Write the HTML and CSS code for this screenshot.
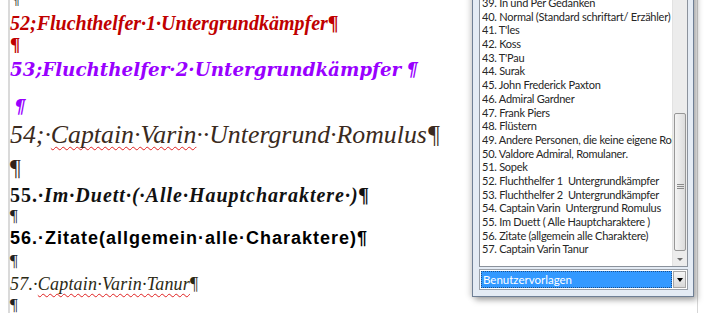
FILE: index.html
```html
<!DOCTYPE html>
<html lang="de">
<head>
<meta charset="UTF-8" />
<title>Formatvorlagen</title>
<link rel="stylesheet" href="styles.css">
</head>
<body>
  <div class="page">
    <div class="doc">
      <p class="para cut">¶</p>
      <p class="para p52">52;Fluchthelfer·1·Untergrundkämpfer<span class="pil">¶</span></p>
      <p class="para p52 blank">¶</p>
      <p class="para p53">53;Fluchthelfer·2·Untergrundkämpfer<span class="gap"></span>¶</p>
      <p class="para p53 blank">¶</p>
      <p class="para p54">54;·<span class="spell">Captain·Varin</span>··Untergrund·Romulus¶</p>
      <p class="para p54 blank">¶</p>
      <p class="para p55"><span class="num">55.</span>·Im·Duett·(·Alle·Hauptcharaktere·)¶</p>
      <p class="para normal blank">¶</p>
      <p class="para p56">56.·Zitate(allgemein·alle·Charaktere)¶</p>
      <p class="para normal blank">¶</p>
      <p class="para p57">57.·<span class="spell">Captain·Varin·Tanur</span><span class="pil">¶</span></p>
      <p class="para normal blank last">¶</p>
    </div>

    <div class="page-edge"></div>

    <div class="styles-win">
      <div class="listbox">
        <ul class="items">
          <li>39. In und Per Gedanken</li>
          <li>40. Normal (Standard schriftart/ Erzähler)</li>
          <li>41. T'les</li>
          <li>42. Koss</li>
          <li>43. T'Pau</li>
          <li>44. Surak</li>
          <li>45. John Frederick Paxton</li>
          <li>46. Admiral Gardner</li>
          <li>47. Frank Piers</li>
          <li>48. Flüstern</li>
          <li>49. Andere Personen, die keine eigene Rolle haben</li>
          <li>50. Valdore Admiral, Romulaner.</li>
          <li>51. Sopek</li>
          <li>52. Fluchthelfer 1&nbsp; Untergrundkämpfer</li>
          <li>53. Fluchthelfer 2&nbsp; Untergrundkämpfer</li>
          <li>54. Captain Varin&nbsp; Untergrund Romulus</li>
          <li>55. Im Duett ( Alle Hauptcharaktere )</li>
          <li>56. Zitate (allgemein alle Charaktere)</li>
          <li>57. Captain Varin Tanur</li>
        </ul>
        <div class="scrollbar">
          <div class="track">
            <div class="thumb"><span class="grip"></span></div>
          </div>
          <div class="arrow-down"></div>
        </div>
      </div>
      <div class="combo">
        <div class="combo-value">Benutzervorlagen</div>
        <div class="combo-btn"></div>
      </div>
    </div>
  </div>
</body>
</html>
```

FILE: styles.css
```css
* {
  margin: 0;
  padding: 0;
  box-sizing: border-box;
}

html, body {
  width: 709px;
  height: 313px;
  overflow: hidden;
  background: #fff;
}

.page {
  position: relative;
  width: 709px;
  height: 313px;
  overflow: hidden;
}

/* document with formatting marks */
.doc {
  margin-left: 8px;
  height: 313px;
  border-left: 2px solid #dadada;
  display: flex;
  flex-direction: column;
}

.para {
  white-space: nowrap;
  font-family: "Liberation Serif", serif;
}

.cut {
  height: 6px;
  line-height: 0;
  font-size: 16px;
  color: #222;
  overflow: hidden;
  padding-left: 2px;
}

.p52 {
  height: 28px;
  line-height: 34px;
  font-size: 20px;
  font-weight: bold;
  font-style: italic;
  color: #c00000;
}

.p52 .pil {
  font-style: normal;
}

.p52.blank {
  height: 21px;
  line-height: 21px;
  font-style: normal;
  font-size: 19px;
}

.p53 {
  height: 27px;
  line-height: 30px;
  font-family: "DejaVu Serif", serif;
  font-size: 18.3px;
  font-weight: bold;
  font-style: italic;
  color: #9900ff;
}

.p53 .gap {
  display: inline-block;
  width: 5px;
}

.p53.blank {
  height: 32px;
  line-height: 50px;
  padding-left: 4px;
}

.p54 {
  height: 38px;
  line-height: 42px;
  font-size: 25.8px;
  font-style: italic;
  color: #3a2a20;
}

.p54.blank {
  height: 28px;
  line-height: 30px;
  font-style: normal;
  font-size: 24px;
  color: #35231a;
}

.p55 {
  height: 25px;
  line-height: 30px;
  font-size: 20px;
  letter-spacing: 1px;
  font-weight: bold;
  font-style: italic;
  color: #111;
}

.p55 .num {
  font-style: normal;
}

.normal {
  height: 20px;
  line-height: 22px;
  font-size: 17px;
  color: #222;
}

.p56 {
  height: 25px;
  line-height: 26px;
  font-family: "Liberation Sans", sans-serif;
  font-size: 18px;
  letter-spacing: 1px;
  font-weight: bold;
  color: #000;
}

.p57 {
  height: 22px;
  line-height: 28px;
  font-size: 18px;
  letter-spacing: 0.2px;
  font-style: italic;
  color: #2c2a14;
}

.p57 .pil {
  font-style: normal;
}

.last {
  line-height: 26px;
}

.spell {
  text-decoration: underline wavy #e02020;
  text-decoration-thickness: 1px;
  text-underline-offset: 3px;
  text-decoration-skip-ink: none;
}

.page-edge {
  position: absolute;
  left: 697px;
  top: 0;
  width: 1px;
  height: 313px;
  background: #d6d6d6;
}

/* floating styles window */
.styles-win {
  position: absolute;
  left: 472px;
  top: -14px;
  width: 222px;
  height: 311px;
  background: #e4ebf4;
  border: 1px solid #6f7f95;
  box-shadow: 3px 3px 6px rgba(0, 0, 0, 0.35), -3px 0 5px rgba(0, 0, 0, 0.12);
  padding: 0 5px 6px 6px;
  display: flex;
  flex-direction: column;
  gap: 2px;
}

.listbox {
  flex: 1;
  border: 1px solid #8b929c;
  border-top: none;
  background: #fff;
  display: flex;
  overflow: hidden;
}

.items {
  list-style: none;
  flex: 1;
  min-width: 0;
  overflow: hidden;
  padding: 9px 0 0 2px;
  font-family: "Lato", sans-serif;
  font-size: 11px;
  letter-spacing: -0.25px;
  color: #262626;
}

.items li {
  height: 13.7px;
  line-height: 13.7px;
  white-space: nowrap;
  overflow: hidden;
}

.scrollbar {
  width: 15px;
  background: #ececec;
  border-left: 1px solid #e2e2e2;
  display: flex;
  flex-direction: column;
}

.track {
  flex: 1;
  padding-top: 126px;
  padding-bottom: 1px;
}

.thumb {
  height: 138px;
  margin: 0 1px;
  border: 1px solid #979797;
  border-radius: 2px;
  background: linear-gradient(to right, #f4f4f4, #dcdcdc);
  display: flex;
  align-items: center;
  justify-content: center;
  padding-top: 8px;
}

.grip {
  width: 7px;
  height: 5px;
  border-top: 1px solid #8a8a8a;
  border-bottom: 1px solid #8a8a8a;
  position: relative;
}

.grip::after {
  content: "";
  position: absolute;
  left: 0;
  right: 0;
  top: 1px;
  border-top: 1px solid #8a8a8a;
}

.arrow-down {
  height: 14px;
  display: flex;
  align-items: center;
  justify-content: center;
}

.arrow-down::before {
  content: "";
  border-left: 3px solid transparent;
  border-right: 3px solid transparent;
  border-top: 3px solid #6e6e6e;
}

.combo {
  height: 21px;
  border: 1px solid #9aa0a8;
  background: #fff;
  display: flex;
  padding: 1px;
}

.combo-value {
  flex: 1;
  background: #3399ff;
  outline: 1px dotted #1d4f8a;
  outline-offset: -1px;
  color: #fff;
  font-family: "Lato", sans-serif;
  font-size: 11.5px;
  line-height: 17px;
  padding-left: 2px;
}

.combo-btn {
  width: 13px;
  margin-left: 1px;
  border: 1px solid #a7a7a7;
  background: linear-gradient(#f6f6f6, #d8d8d8);
  display: flex;
  align-items: center;
  justify-content: center;
}

.combo-btn::before {
  content: "";
  border-left: 3.5px solid transparent;
  border-right: 3.5px solid transparent;
  border-top: 4px solid #000;
}
```
